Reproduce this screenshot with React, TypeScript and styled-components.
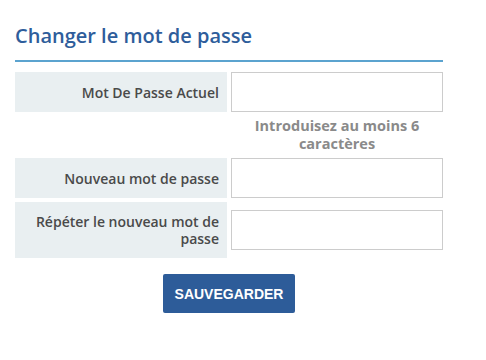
import * as React from "react";
import styled, { createGlobalStyle } from "styled-components";

const GlobalStyle = createGlobalStyle`
    body {
        margin: 0;
        background: #fff;
        font-family: "Open Sans", "Liberation Sans", sans-serif;
    }
`;

const Page = styled.div`
    width: 428px;
    padding: 22px 15px 0 15px;
`;

const Title = styled.h2`
    margin: 0;
    padding-bottom: 10px;
    border-bottom: 2px solid #5ba3cf;
    color: #2e5d9b;
    font-size: 20px;
    font-weight: 600;
    line-height: 28px;
`;

const Form = styled.div`
    display: grid;
    grid-template-columns: 212px 212px;
    column-gap: 4px;
    margin-top: 10px;
`;

const Label = styled.label<{ $tall?: boolean }>`
    display: flex;
    align-items: center;
    justify-content: flex-end;
    text-align: right;
    min-height: ${(p) => (p.$tall ? "56px" : "40px")};
    padding: 0 8px 0 10px;
    margin-bottom: 4px;
    background: #e9eff1;
    color: #4a4a4a;
    font-size: 14px;
    font-weight: 600;
    line-height: 17px;
    box-sizing: border-box;
`;

const Cell = styled.div`
    display: flex;
    align-items: center;
    margin-bottom: 4px;
`;

const Input = styled.input`
    width: 100%;
    height: 40px;
    border: 1px solid #cccccc;
    box-sizing: border-box;
    outline: none;
`;

const Hint = styled.div`
    grid-column: 2;
    margin: 1px 0 5px;
    text-align: center;
    color: #8a8a8a;
    font-size: 14.5px;
    font-weight: 700;
    line-height: 18px;
`;

const Actions = styled.div`
    display: flex;
    justify-content: center;
    margin-top: 12px;
`;

const SaveButton = styled.button`
    height: 39px;
    padding: 0 10px;
    min-width: 132px;
    border: none;
    border-radius: 2px;
    background: #2d5c99;
    color: #fff;
    font-family: "Liberation Sans", Arial, sans-serif;
    font-size: 14px;
    font-weight: 700;
`;

export default function App() {
    return (
        <Page>
            <GlobalStyle />
            <Title>Changer le mot de passe</Title>
            <Form>
                <Label>Mot De Passe Actuel</Label>
                <Cell>
                    <Input type="password" />
                </Cell>
                <Hint>
                    Introduisez au moins 6
                    <br />
                    caractères
                </Hint>
                <Label>Nouveau mot de passe</Label>
                <Cell>
                    <Input type="password" />
                </Cell>
                <Label $tall>Répéter le nouveau mot de passe</Label>
                <Cell>
                    <Input type="password" />
                </Cell>
            </Form>
            <Actions>
                <SaveButton>SAUVEGARDER</SaveButton>
            </Actions>
        </Page>
    );
}
